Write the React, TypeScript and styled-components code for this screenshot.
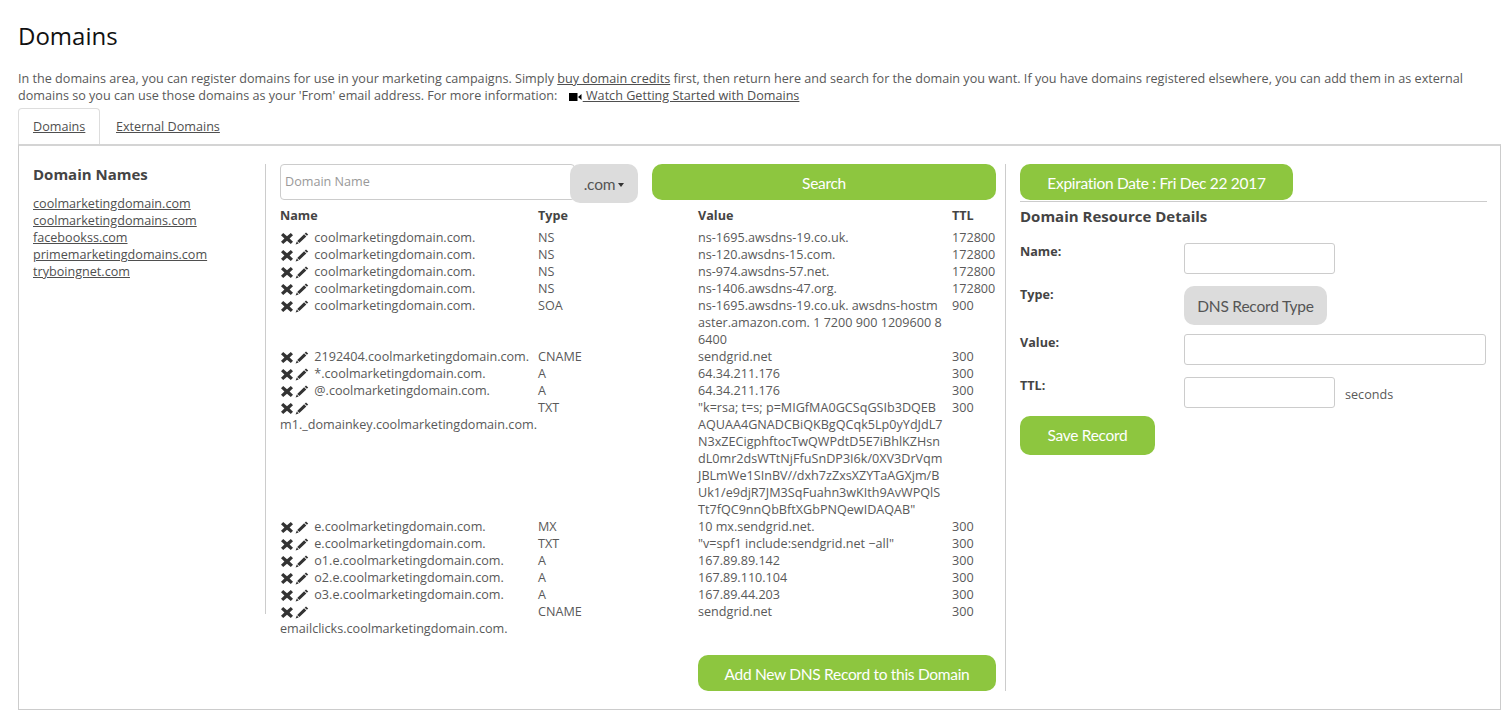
import React from "react";
import styled, { createGlobalStyle } from "styled-components";

const GlobalStyle = createGlobalStyle`
  html, body {
    margin: 0;
    padding: 0;
    background: #fff;
  }

  body {
    font-family: "Open Sans", "Liberation Sans", sans-serif;
    font-size: 12.62px;
    line-height: 17px;
    color: #595959;
  }

  * {
    box-sizing: border-box;
  }
`;

const Page = styled.div`
  width: 1507px;
  height: 718px;
  padding: 20px 6px 0 18px;
  overflow: hidden;
`;

const Title = styled.h1`
  margin: 0;
  height: 32px;
  font-size: 24px;
  line-height: 32px;
  font-weight: 400;
  color: #111;
`;

const Intro = styled.p`
  margin: 18px 0 0;
`;

const TextLink = styled.a`
  color: #4f4f4f;
  text-decoration: underline;
`;

const VideoIcon = styled.svg`
  width: 13px;
  height: 8px;
  margin: 0 1px -1px 8px;
`;

const Tabs = styled.div`
  display: flex;
  margin-top: 4px;
  height: 36px;
`;

const Tab = styled.div<{ $active?: boolean }>`
  width: ${(p) => (p.$active ? "82px" : "auto")};
  padding: 9px 15px 0 ${(p) => (p.$active ? "14px" : "15px")};
  border: 1px solid ${(p) => (p.$active ? "#ddd" : "transparent")};
  border-bottom: none;
  border-radius: 4px 4px 0 0;
`;

const Panel = styled.div`
  display: flex;
  align-items: flex-start;
  width: 1483px;
  height: 566px;
  padding-top: 18px;
  border: 1px solid #ccc;
  border-top: 2px solid #d4d4d4;
`;

const NamesColumn = styled.div`
  width: 247px;
  height: 450px;
  padding-left: 14px;
  border-right: 1px solid #ccc;
`;

const SectionTitle = styled.h2`
  margin: 0;
  font-size: 15px;
  line-height: 20px;
  font-weight: 700;
  color: #444;
`;

const DetailsTitle = styled(SectionTitle)`
  margin-top: 4px;
`;

const NameList = styled.div`
  display: flex;
  flex-direction: column;
  margin-top: 11px;
`;

const RecordsColumn = styled.div`
  width: 740px;
  height: 527px;
  padding: 0 9px 0 14px;
  border-right: 1px solid #ccc;
`;

const SearchRow = styled.div`
  display: flex;
  align-items: flex-start;
`;

const DomainInput = styled.input`
  width: 295px;
  height: 36px;
  padding: 0 4px 1px;
  border: 1px solid #ccc;
  border-radius: 4px;
  font-family: "Open Sans", sans-serif;
  font-size: 12.62px;
  color: #555;
  outline: none;

  &::placeholder {
    color: #999;
  }
`;

const GreyButton = styled.div<{ $overlap?: boolean }>`
  display: flex;
  align-items: center;
  justify-content: center;
  gap: 3px;
  height: 39px;
  padding-top: 1px;
  border-radius: 10px;
  background: #dcdcdc;
  font-family: "Lato", sans-serif;
  font-size: 15.5px;
  letter-spacing: -0.2px;
  color: #555;
  width: ${(p) => (p.$overlap ? "68px" : "143px")};
  margin-left: ${(p) => (p.$overlap ? "-5px" : "0")};
`;

const Caret = styled.span`
  width: 0;
  height: 0;
  margin-top: 2px;
  border-left: 3.5px solid transparent;
  border-right: 3.5px solid transparent;
  border-top: 4px solid #333;
`;

const GreenButton = styled.button<{ $width: string; $tall?: boolean }>`
  display: block;
  flex: none;
  width: ${(p) => p.$width};
  height: ${(p) => (p.$tall ? "39px" : "36px")};
  padding: ${(p) => (p.$tall ? "0 0 1px" : "2px 0 0")};
  border: none;
  border-radius: 10px;
  background: #8dc63f;
  font-family: "Lato", sans-serif;
  font-size: 15.5px;
  letter-spacing: -0.3px;
  color: #fff;
`;

const SearchButton = styled(GreenButton)`
  margin-left: 14px;
`;

const RecordGrid = styled.div`
  display: grid;
  grid-template-columns: 258px 160px 254px 44px;
  margin-top: 3px;
`;

const HeadCell = styled.div`
  height: 23px;
  padding-top: 1px;
  font-weight: 700;
  color: #444;
`;

const Cell = styled.div`
  min-width: 0;
`;

const ValueCell = styled.div`
  min-width: 0;
  padding-right: 9.5px;
  word-break: break-all;
`;

const RecordIcon = styled.svg<{ $gap: string }>`
  width: 14px;
  height: 13px;
  margin-right: ${(p) => p.$gap};
  vertical-align: -3px;
  fill: #333;
`;

const AddRow = styled.div`
  display: flex;
  justify-content: flex-end;
  margin-top: 18px;
`;

const DetailsColumn = styled.div`
  width: 481px;
  padding-left: 14px;
`;

const ExpiryRule = styled.div`
  border-bottom: 1px solid #ccc;
  padding-bottom: 1px;
`;

const DetailsForm = styled.div`
  display: flex;
  flex-direction: column;
`;

const FormRow = styled.div<{ $gap: string }>`
  display: flex;
  align-items: flex-start;
  margin-top: ${(p) => p.$gap};
`;

const FormLabel = styled.label`
  width: 164px;
  flex: none;
  font-weight: 700;
  color: #444;
`;

const FormInput = styled.input<{ $wide?: boolean }>`
  width: ${(p) => (p.$wide ? "302px" : "151px")};
  height: 31px;
  border: 1px solid #ccc;
  border-radius: 3px;
  outline: none;
`;

const Unit = styled.span`
  margin: 9px 0 0 10px;
`;

const SaveRow = styled.div`
  margin-top: 8px;
`;

const names = [
  "coolmarketingdomain.com",
  "coolmarketingdomains.com",
  "facebookss.com",
  "primemarketingdomains.com",
  "tryboingnet.com",
];

const records = [
  ["coolmarketingdomain.com.", "NS", "ns-1695.awsdns-19.co.uk.", "172800"],
  ["coolmarketingdomain.com.", "NS", "ns-120.awsdns-15.com.", "172800"],
  ["coolmarketingdomain.com.", "NS", "ns-974.awsdns-57.net.", "172800"],
  ["coolmarketingdomain.com.", "NS", "ns-1406.awsdns-47.org.", "172800"],
  ["coolmarketingdomain.com.", "SOA", "ns-1695.awsdns-19.co.uk. awsdns-hostmaster.amazon.com. 1 7200 900 1209600 86400", "900"],
  ["2192404.coolmarketingdomain.com.", "CNAME", "sendgrid.net", "300"],
  ["*.coolmarketingdomain.com.", "A", "64.34.211.176", "300"],
  ["@.coolmarketingdomain.com.", "A", "64.34.211.176", "300"],
  ["m1._domainkey.coolmarketingdomain.com.", "TXT", "\"k=rsa; t=s; p=MIGfMA0GCSqGSIb3DQEBAQUAA4GNADCBiQKBgQCqk5Lp0yYdJdL7N3xZECigphftocTwQWPdtD5E7iBhlKZHsndL0mr2dsWTtNjFfuSnDP3I6k/0XV3DrVqmJBLmWe1SInBV//dxh7zZxsXZYTaAGXjm/BUk1/e9djR7JM3SqFuahn3wKIth9AvWPQlSTt7fQC9nnQbBftXGbPNQewIDAQAB\"", "300"],
  ["e.coolmarketingdomain.com.", "MX", "10 mx.sendgrid.net.", "300"],
  ["e.coolmarketingdomain.com.", "TXT", "\"v=spf1 include:sendgrid.net −all\"", "300"],
  ["o1.e.coolmarketingdomain.com.", "A", "167.89.89.142", "300"],
  ["o2.e.coolmarketingdomain.com.", "A", "167.89.110.104", "300"],
  ["o3.e.coolmarketingdomain.com.", "A", "167.89.44.203", "300"],
  ["emailclicks.coolmarketingdomain.com.", "CNAME", "sendgrid.net", "300"],
];

const RemoveIcon = () => (
  <RecordIcon $gap="1px" viewBox="0 0 14 13">
    <path d="M3.2 1 7 4.2 10.8 1 13 3.2 9.6 6.5 13 9.8 10.8 12 7 8.8 3.2 12 1 9.8 4.4 6.5 1 3.2Z" />
  </RecordIcon>
);

const EditIcon = () => (
  <RecordIcon $gap="2px" viewBox="0 0 14 13">
    <path d="M11 .4 13.2 2.5 11.9 3.8 9.7 1.7ZM9.1 2.3 11.3 4.4 4.4 11 2.2 8.9ZM1.8 9.6 3.7 11.4.6 12.6Z" />
  </RecordIcon>
);

export default function App() {
  return (
    <Page>
      <GlobalStyle />
      <Title>Domains</Title>
      <Intro>
        In the domains area, you can register domains for use in your marketing campaigns. Simply{" "}
        <TextLink>buy domain credits</TextLink> first, then return here and search for the domain you want. If you have
        domains registered elsewhere, you can add them in as external domains so you can use those domains as your
        'From' email address. For more information:{" "}
        <VideoIcon viewBox="0 0 13 8">
          <path d="M0 0h8.5v8H0ZM9 4 12.5 1v6Z" fill="#000" />
        </VideoIcon>
        <TextLink> Watch Getting Started with Domains</TextLink>
      </Intro>
      <Tabs>
        <Tab $active>
          <TextLink>Domains</TextLink>
        </Tab>
        <Tab>
          <TextLink>External Domains</TextLink>
        </Tab>
      </Tabs>
      <Panel>
        <NamesColumn>
          <SectionTitle>Domain Names</SectionTitle>
          <NameList>
            {names.map((name) => (
              <div key={name}>
                <TextLink>{name}</TextLink>
              </div>
            ))}
          </NameList>
        </NamesColumn>
        <RecordsColumn>
          <SearchRow>
            <DomainInput placeholder="Domain Name" />
            <GreyButton $overlap>
              .com
              <Caret />
            </GreyButton>
            <SearchButton $width="344px">Search</SearchButton>
          </SearchRow>
          <RecordGrid>
            <HeadCell>Name</HeadCell>
            <HeadCell>Type</HeadCell>
            <HeadCell>Value</HeadCell>
            <HeadCell>TTL</HeadCell>
            {records.map((record, i) => (
              <React.Fragment key={i}>
                <Cell>
                  <RemoveIcon />
                  <EditIcon /> {record[0]}
                </Cell>
                <Cell>{record[1]}</Cell>
                <ValueCell>{record[2]}</ValueCell>
                <Cell>{record[3]}</Cell>
              </React.Fragment>
            ))}
          </RecordGrid>
          <AddRow>
            <GreenButton $width="298px">Add New DNS Record to this Domain</GreenButton>
          </AddRow>
        </RecordsColumn>
        <DetailsColumn>
          <ExpiryRule>
            <GreenButton $width="273px">Expiration Date : Fri Dec 22 2017</GreenButton>
          </ExpiryRule>
          <DetailsTitle>Domain Resource Details</DetailsTitle>
          <DetailsForm>
            <FormRow $gap="17px">
              <FormLabel>Name:</FormLabel>
              <FormInput />
            </FormRow>
            <FormRow $gap="12px">
              <FormLabel>Type:</FormLabel>
              <GreyButton>DNS Record Type</GreyButton>
            </FormRow>
            <FormRow $gap="9px">
              <FormLabel>Value:</FormLabel>
              <FormInput $wide />
            </FormRow>
            <FormRow $gap="12px">
              <FormLabel>TTL:</FormLabel>
              <FormInput />
              <Unit>seconds</Unit>
            </FormRow>
          </DetailsForm>
          <SaveRow>
            <GreenButton $width="135px" $tall>
              Save Record
            </GreenButton>
          </SaveRow>
        </DetailsColumn>
      </Panel>
    </Page>
  );
}
